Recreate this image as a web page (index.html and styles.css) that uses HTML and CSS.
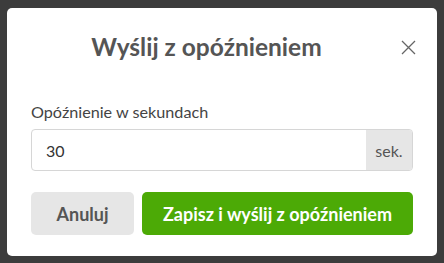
FILE: index.html
```html
<!DOCTYPE html>
<html lang="pl">
<head>
<meta charset="utf-8">
<link rel="stylesheet" href="styles.css">
</head>
<body>
<div class="modal">
  <div class="modal-header">
    <h2 class="modal-title">Wyślij z opóźnieniem</h2>
    <button class="close" aria-label="Zamknij">
      <svg width="15" height="15" viewBox="0 0 15 15"><path d="M1 1 L14 14 M14 1 L1 14" stroke="#666" stroke-width="1.3" fill="none"/></svg>
    </button>
  </div>
  <label class="field-label">Opóźnienie w sekundach</label>
  <div class="input-group">
    <div class="input"><span class="value">30</span></div>
    <span class="addon">sek.</span>
  </div>
  <div class="actions">
    <button class="btn btn-default">Anuluj</button>
    <button class="btn btn-primary">Zapisz i wyślij z opóźnieniem</button>
  </div>
</div>
</body>
</html>
```

FILE: styles.css
```css
html, body {
  margin: 0;
  padding: 0;
  background: #3c3c3c;
  font-family: Lato, "Open Sans", sans-serif;
}
body {
  padding: 8px 7px 0 7px;
}
.modal {
  width: 430px;
  height: 248px;
  box-sizing: border-box;
  background: #fff;
  border-radius: 5px;
  padding: 24px 24px 21px 24px;
  display: flex;
  flex-direction: column;
}
.modal-header {
  display: flex;
  align-items: center;
  height: 30px;
}
.modal-title {
  flex: 1;
  margin: 0;
  text-align: center;
  font-size: 24.5px;
  line-height: 30px;
  font-weight: 700;
  color: #555;
}
.close {
  width: 34px;
  height: 30px;
  border: 0;
  background: none;
  padding: 0;
  display: flex;
  align-items: center;
  justify-content: flex-end;
  margin-right: -3px;
}
.field-label {
  display: block;
  margin-top: 40px;
  font-size: 16.2px;
  line-height: 20px;
  color: #444;
}
.input-group {
  margin-top: 7px;
  display: flex;
  height: 42px;
  border: 1px solid #d6d6d6;
  border-radius: 4px;
  box-sizing: border-box;
  overflow: hidden;
}
.input {
  flex: 1;
  display: flex;
  align-items: center;
  padding-left: 14px;
  font-size: 16px;
  color: #333;
}
.addon {
  width: 46px;
  background: #e6e6e6;
  color: #555;
  font-size: 16px;
  display: flex;
  align-items: center;
  justify-content: center;
}
.actions {
  margin-top: 21px;
  display: flex;
  gap: 8px;
}
.btn {
  height: 43px;
  border: 0;
  border-radius: 5px;
  font-family: Lato, sans-serif;
  font-size: 18px;
  font-weight: 700;
}
.btn-default {
  width: 103px;
  background: #e6e6e6;
  color: #555;
}
.btn-primary {
  flex: 1;
  background: #4caa06;
  color: #fff;
}
```
